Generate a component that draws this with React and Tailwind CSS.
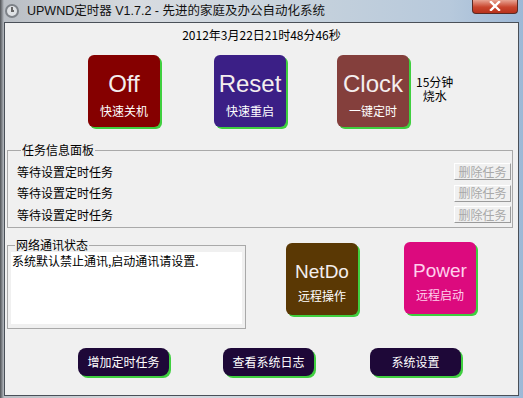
import React from "react";

const cjk = "font-['SimSun','Noto_Sans_CJK_SC',sans-serif]";

const bigButtons = [
  { title: "Off", sub: "快速关机", bg: "bg-[#850000]", ml: "ml-[83px]" },
  { title: "Reset", sub: "快速重启", bg: "bg-[#3b1f86]", ml: "ml-[54px]" },
  { title: "Clock", sub: "一键定时", bg: "bg-[#843f3c]", ml: "ml-[51px]" },
];

function BigButton({ title, sub, bg, titleColor = "text-[#f4eeee]", subColor = "text-white", titleSize = "text-[24px]" }) {
  return (
    <div
      className={`w-[72px] h-[72px] rounded-[6px] ${bg} shadow-[2px_2px_0_#3fcf3f] flex flex-col items-center justify-center`}
    >
      <div className={`${titleSize} leading-none font-['Comic_Sans_MS','Liberation_Sans',sans-serif] ${titleColor} mt-[6px]`}>
        {title}
      </div>
      <div className={`text-[12px] leading-none mt-[9px] ${subColor} font-['Noto_Sans_CJK_SC',sans-serif]`}>{sub}</div>
    </div>
  );
}

function PillButton({ label, ml }) {
  return (
    <div
      className={`${ml} w-[91px] h-[28px] rounded-[8px] bg-[#1e0838] shadow-[2px_2px_0_#3fcf3f] flex items-center justify-center text-white text-[12px] font-['Noto_Sans_CJK_SC',sans-serif]`}
    >
      {label}
    </div>
  );
}

function TaskRow() {
  return (
    <div className="flex items-center justify-between h-[21.5px]">
      <span className="text-[12px] text-black">等待设置定时任务</span>
      <div className="w-[57px] h-[17px] bg-[#f0f0f0] border border-t-[#ffffff] border-l-[#ffffff] border-r-[#9a9a9a] border-b-[#9a9a9a] flex items-center justify-center text-[12px] text-[#a8a8a8]">
        删除任务
      </div>
    </div>
  );
}

export default function App() {
  return (
    <div className="w-[523px] h-[398px] overflow-hidden relative bg-[linear-gradient(90deg,#4f5256_0px,#b9bec4_4px,#d7dbe0_140px,#c3d0dc_330px,#b7c9dc_450px,#9db8d6_523px)]">
      {/* title bar */}
      <div className="h-[22px] flex items-center relative">
        <div className="ml-[5px] w-[14px] h-[14px] rounded-full bg-[#7d8288] flex items-center justify-center">
          <div className="w-[10px] h-[10px] rounded-full bg-[#dfe2e5] relative">
            <div className="absolute left-[4px] top-[1px] w-[1.5px] h-[4px] bg-[#666]" />
            <div className="absolute left-[4px] top-[4px] w-[3px] h-[1.5px] bg-[#666]" />
          </div>
        </div>
        <span className="ml-[8px] text-[12.5px] text-[#111] font-['Liberation_Sans','Noto_Sans_CJK_SC',sans-serif] leading-none">
          UPWND定时器 V1.7.2 - 先进的家庭及办公自动化系统
        </span>
        <div className="absolute left-[472px] top-0 w-[46px] h-[14px] rounded-b-[4px] border border-t-0 border-[#5a2a24] bg-[linear-gradient(180deg,#e8a493,#c9452d_55%,#b8321c)] flex items-center justify-center overflow-hidden">
          <svg width="12" height="10" viewBox="0 0 12 10" className="-mt-[2px]">
            <path d="M2 1 L10 9 M10 1 L2 9" stroke="white" strokeWidth="2.4" strokeLinecap="square" />
          </svg>
        </div>
      </div>

      {/* client area */}
      <div className={`ml-[4px] w-[515px] h-[374px] border border-[#4a5058] bg-[#f0f0f0] ${cjk}`}>
        <div className="pt-[5px] h-[19px] text-center text-[12px] leading-[14px] text-black">
          2012年3月22日21时48分46秒
        </div>

        <div className="flex items-center mt-[13px]">
          {bigButtons.map((b) => (
            <div key={b.title} className={b.ml}>
              <BigButton title={b.title} sub={b.sub} bg={b.bg} />
            </div>
          ))}
          <div className="ml-[7px] text-[12px] leading-[14px] text-black text-center -mt-[4px]">
            <div>15分钟</div>
            <div>烧水</div>
          </div>
        </div>

        <fieldset className="mt-[16px] ml-[2px] w-[506px] h-[85px] border border-[#a9a9a9] pl-[9px] pr-[1px] pb-[2px]">
          <legend className="ml-[4px] px-[1px] text-[12px] leading-[14px] text-black">任务信息面板</legend>
          <div className="mt-[4px]">
            <TaskRow />
            <TaskRow />
            <TaskRow />
          </div>
        </fieldset>

        <div className="flex mt-[10px]">
          <fieldset className="ml-[2px] w-[239px] h-[91px] border border-[#a9a9a9] px-[3px] pb-[5px]">
            <legend className="ml-[4px] px-[1px] text-[12px] leading-[14px] text-black">网络通讯状态</legend>
            <div className="h-[72px] bg-white text-[12px] leading-[16px] text-black px-[1px] pt-[1px]">
              系统默认禁止通讯,启动通讯请设置.
            </div>
          </fieldset>
          <div className="ml-[40px] mt-[5px]">
            <BigButton title="NetDo" sub="远程操作" bg="bg-[#5a3804]" titleSize="text-[19px]" />
          </div>
          <div className="ml-[46px] mt-[4px]">
            <BigButton
              title="Power"
              sub="远程启动"
              bg="bg-[#dc0a7e]"
              titleSize="text-[19px]"
              titleColor="text-[#ffd0ec]"
              subColor="text-[#ffd0ec]"
            />
          </div>
        </div>

        <div className="flex mt-[19px]">
          <PillButton label="增加定时任务" ml="ml-[73px]" />
          <PillButton label="查看系统日志" ml="ml-[54px]" />
          <PillButton label="系统设置" ml="ml-[56px]" />
        </div>
      </div>
    </div>
  );
}
